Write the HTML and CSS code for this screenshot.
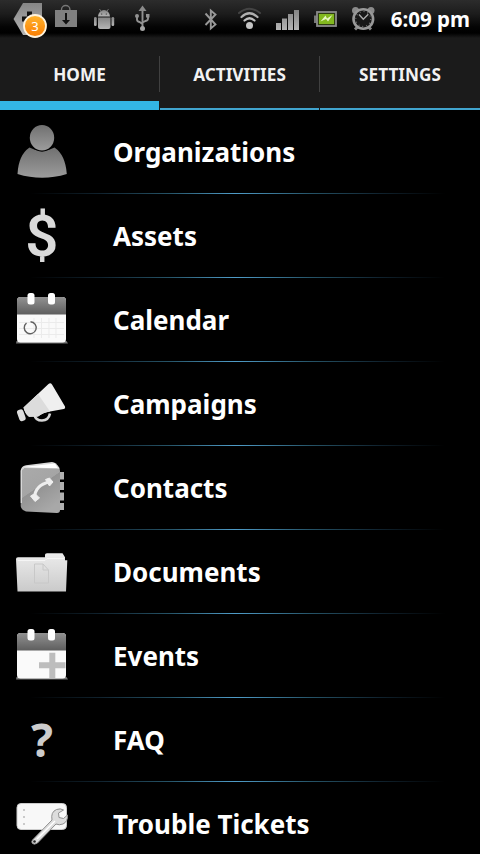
FILE: index.html
```html
<!DOCTYPE html>
<html lang="en">
<head>
<meta charset="UTF-8">
<meta name="viewport" content="width=device-width, initial-scale=1.0">
<title>Home</title>
<link rel="stylesheet" href="styles.css">
</head>
<body>
<svg class="defs" width="0" height="0">
    <defs>
        <linearGradient id="grey" x1="0" y1="0" x2="0" y2="1"><stop offset="0" stop-color="#707070"/><stop offset="1" stop-color="#9c9c9c"/></linearGradient>
        <linearGradient id="light" x1="0" y1="0" x2="0" y2="1"><stop offset="0" stop-color="#ececec"/><stop offset="1" stop-color="#cacaca"/></linearGradient>
        <linearGradient id="head" x1="0" y1="0" x2="0" y2="1"><stop offset="0" stop-color="#929292"/><stop offset="1" stop-color="#5e5e5e"/></linearGradient>
        <linearGradient id="status" x1="0" y1="0" x2="0" y2="1"><stop offset="0" stop-color="#858585"/><stop offset="1" stop-color="#b5b5b5"/></linearGradient>
        <linearGradient id="orange" x1="0" y1="0" x2="0" y2="1"><stop offset="0" stop-color="#ffb52e"/><stop offset="1" stop-color="#fa7c00"/></linearGradient>
        <linearGradient id="cover" x1="0" y1="0" x2=".6" y2="1"><stop offset="0" stop-color="#aaa"/><stop offset=".5" stop-color="#a5a5a5"/><stop offset=".51" stop-color="#939393"/><stop offset="1" stop-color="#a8a8a8"/></linearGradient>
        <g id="calendar">
            <path d="M4.500 51h50l1.500 2.500h-52z" fill="#777"/>
            <rect x="5" y="7" width="49" height="45.500" rx="3.500" fill="#fafafa"/>
            <path d="M5 24.500V10.500a3.500 3.500 0 0 1 3.500-3.500h42a3.500 3.500 0 0 1 3.500 3.500v14z" fill="url(#head)"/>
            <rect x="15.500" y="3" width="7" height="11.500" rx="2.500" fill="#fff"/>
            <rect x="36" y="3" width="7" height="11.500" rx="2.500" fill="#fff"/>
        </g>
    </defs>
</svg>

<div class="status-bar">
    <svg class="status-icons" width="480" height="40" viewBox="0 0 480 40">
        <!-- notification tag with counter -->
        <path d="M23 3h19v32H23l-9.500-16z" fill="url(#status)"/>
        <path d="M27 11.500h5v5h-5v5h-5v-5h5z" fill="#111"/>
        <circle cx="35" cy="26" r="11" fill="url(#orange)" stroke="#fff3dc" stroke-width="1.800"/>
        <text class="badge" x="35" y="30.500" text-anchor="middle">3</text>
        <!-- market bag -->
        <path d="M61.500 11V9.500a4.200 4 0 0 1 8.400 0V11" fill="none" stroke="#777" stroke-width="1.400"/>
        <rect x="55" y="10" width="22" height="17" fill="#808080"/>
        <path d="M65 13h2v7h3l-4 4.500-4-4.500h3z" fill="#111"/>
        <!-- android -->
        <g fill="url(#status)">
            <path d="M98 16.500a6 6.500 0 0 1 12 0z"/>
            <path d="M98 17.500h12.500v9.500a2 2 0 0 1-2 2h-8.500a2 2 0 0 1-2-2z"/>
            <rect x="94" y="17" width="2.700" height="9" rx="1.300"/>
            <rect x="111.500" y="17" width="2.700" height="9" rx="1.300"/>
        </g>
        <path d="M99.500 9l2 3m7-3l-2 3" stroke="#808080" stroke-width=".8"/>
        <circle cx="101.700" cy="14" r=".6" fill="#222"/><circle cx="106.300" cy="14" r=".6" fill="#222"/>
        <!-- usb -->
        <path d="M142.500 9v19M137 16.500v3q0 2 2.500 2.500l3 2m5.500-7v1.500q0 2-2.500 2.500l-3 1.500" fill="none" stroke="#929292" stroke-width="1.900"/>
        <path d="M142.500 5.500l4 5.500h-8z" fill="#8a8a8a"/>
        <circle cx="142.500" cy="28.500" r="2.500" fill="#a5a5a5"/>
        <circle cx="137" cy="16" r="2" fill="#929292"/>
        <rect x="146" y="14" width="3.500" height="3.500" fill="#929292"/>
        <!-- bluetooth -->
        <path d="M205.500 13.500l10 11-4.700 4V10.500l4.700 4-10 10.500" fill="none" stroke="#999" stroke-width="1.900"/>
        <!-- wifi -->
        <g fill="none" stroke-linecap="round">
            <path d="M239 13q10.500-8.500 21 0" stroke="#444" stroke-width="2"/>
            <path d="M241.500 17q8-7.500 16 0" stroke="#b0b0b0" stroke-width="2.200"/>
            <path d="M244.500 20.500q5-4.500 10 0" stroke="#c0c0c0" stroke-width="2.200"/>
        </g>
        <circle cx="249.500" cy="25.500" r="3.500" fill="#c4c4c4"/>
        <!-- signal -->
        <path d="M276 23h5v7h-5zM282 18.500h5V30h-5zM288 14h5v16h-5zM294 10h5v20h-5z" fill="url(#status)"/>
        <!-- battery -->
        <rect x="314" y="15.500" width="3" height="7.500" fill="#777"/>
        <rect x="317" y="12" width="19" height="14" fill="#303e12" stroke="#8b8b8b" stroke-width="1.800"/>
        <rect x="319" y="14" width="15" height="10" fill="#82b81e"/>
        <path d="M320.500 21.500l5-6 1.500 3 5.500-3.500-4.500 6.500-2-2.500z" fill="#e6f5c4"/>
        <!-- alarm -->
        <path d="M355 29.500l3-3m13 3l-3-3" stroke="#888" stroke-width="3"/>
        <circle cx="355.500" cy="10.500" r="3.500" fill="#8b8b8b"/><circle cx="371" cy="10.500" r="3.500" fill="#8b8b8b"/>
        <circle cx="363.300" cy="19" r="9.800" fill="#181818" stroke="#999" stroke-width="2.600"/>
        <circle cx="363.300" cy="19" r="7.500" fill="none" stroke="#777" stroke-width="1.200" stroke-dasharray="1 2.927"/>
        <path d="M359 14.500l4.300 4.800 5-5" fill="none" stroke="#aaa" stroke-width="1.400"/>
    </svg>
    <span class="clock">6:09 pm</span>
</div>

<nav class="tabs">
    <a class="tab active"><span>HOME</span></a>
    <a class="tab"><span>ACTIVITIES</span></a>
    <a class="tab"><span>SETTINGS</span></a>
</nav>

<ul class="menu">
    <li class="row">
        <svg class="icon" viewBox="0 0 60 60">
            <path d="M17.500 25.500q12.500 7 25 0 11 7.500 12.300 26.500-24.800 7.500-49.300 0Q6.500 33 17.500 25.500z" fill="url(#grey)"/>
            <ellipse cx="30" cy="15.700" rx="13.300" ry="14" fill="#000"/>
            <ellipse cx="30" cy="15.700" rx="12.200" ry="12.700" fill="url(#grey)"/>
        </svg>
        <span class="label">Organizations</span>
    </li>
    <li class="row">
        <svg class="icon" viewBox="0 0 60 60">
            <text class="dollar" x="29.700" y="49.500" text-anchor="middle">$</text>
        </svg>
        <span class="label">Assets</span>
    </li>
    <li class="row">
        <svg class="icon" viewBox="0 0 60 60">
            <use href="#calendar"/>
            <path d="M7 32.500h45M7 38.500h45M7 44.500h45M22 28v20M29.500 28v20M37 28v20M44 28v20" stroke="#ebebeb" fill="none"/>
            <path d="M14.500 33a6 6 0 1 0 4-1.300" fill="none" stroke="#606060" stroke-width="1.400"/>
        </svg>
        <span class="label">Calendar</span>
    </li>
    <li class="row">
        <svg class="icon" viewBox="0 0 60 60">
            <path d="M22.500 41q1 5.500 7.500 5.500t8-7" fill="none" stroke="#d5d5d5" stroke-width="2.600"/>
            <path d="M11.500 33.500L36.500 10q2-1.500 3.500.5L53 32.500q.8 2-1.200 2.500L38 37.500q-7 1-12 5L17 42.800q-4-3-5.500-9.300z" fill="#efefef"/>
            <path d="M11.500 33.500L26 20l12 17.500q-7 1-12 5L17 42.800q-4-3-5.500-9.300z" fill="#dcdcdc"/>
            <rect x="6" y="35.500" width="6.500" height="11.500" rx="2.500" transform="rotate(-20 9.300 41)" fill="#ddd"/>
        </svg>
        <span class="label">Campaigns</span>
    </li>
    <li class="row">
        <svg class="icon" viewBox="0 0 60 60">
            <path d="M9 14q-.5-6 5-6.700L40 4q4 0 7.500 6v8z" fill="#d8d8d8"/>
            <path d="M11 9l32-3.500 3 5z" fill="#fff"/>
            <path d="M48 14h4v7.500h-4zM48 24h4v8h-4zM48 34.500h4v8h-4zM48 45h4v7h-4z" fill="#b0b0b0"/>
            <path d="M8.700 13q0-3 3-3l33.300.5q3 .3 3 3.500v38q0 3-3 3l-31-1.500q-5.300-2-5.300-5.500z" fill="url(#cover)"/>
            <path d="M9.300 45V13q0-2.500 2.500-2.500" fill="none" stroke="#ddd" stroke-width="1.200"/>
            <path d="M22.500 40q.5-13 15-16" fill="none" stroke="#eee" stroke-width="3"/>
            <path d="M18.500 38l4.500-2.500 4.500 4.500-4.500 3.500zM33.500 21.500l4-1.500 3.500 4-3.500 4z" fill="#eee" stroke="#eee" stroke-linejoin="round"/>
        </svg>
        <span class="label">Contacts</span>
    </li>
    <li class="row">
        <svg class="icon" viewBox="0 0 60 60">
            <path d="M4 17q0-1.700 2-1.700h27v-2.500q0-1.500 2-1.500h15.500l2.500 4v3h2.300L54 49.500H5.500z" fill="url(#light)"/>
            <path d="M6 18.500h27l2-2h17" stroke="#f5f5f5" fill="none"/>
            <path d="M22.500 22h8.500l5.500 6v13h-14zM31 22v6h5.500" fill="none" stroke="#c8c8c8"/>
        </svg>
        <span class="label">Documents</span>
    </li>
    <li class="row">
        <svg class="icon" viewBox="0 0 60 60">
            <use href="#calendar"/>
            <path d="M37.300 26.700h6v9.600h10.200v6H43.300V52h-6v-9.700H27v-6h10.300z" fill="#bdbdbd"/>
        </svg>
        <span class="label">Events</span>
    </li>
    <li class="row">
        <svg class="icon" viewBox="0 0 60 60">
            <text class="question" x="30" y="46.500" text-anchor="middle">?</text>
        </svg>
        <span class="label">FAQ</span>
    </li>
    <li class="row">
        <svg class="icon" viewBox="0 0 60 60">
            <rect x="5" y="9.500" width="49.500" height="26" rx="4" fill="#f8f8f8" stroke="#ccc"/>
            <path d="M12 15v2m0 5v2m0 5v2" stroke="#bbb" stroke-width="1.500"/>
            <path d="M20.500 46l19.500-20q-1.500-8 4.500-10.500 4-1.500 7 .5l-5 3 .5 4.500 4.500 1 4-3.500q.5 6.500-4.500 9-4 1.500-7 0l-18.500 19q-3 2-5 .5-1.500-1.500 0-3.500z" fill="#ddd" stroke="#909090"/>
            <path d="M25 45l18-18" stroke="#fff" stroke-width="1.500"/>
            <circle cx="22.500" cy="47.500" r="1.300" fill="#222"/>
        </svg>
        <span class="label">Trouble Tickets</span>
    </li>
</ul>
</body>
</html>
```
FILE: styles.css
```css
html, body {
    margin: 0;
    padding: 0;
    height: 100%;
    overflow: hidden;
}
body {
    background-color: #000;
    color: #fff;
    font-family: "Noto Sans", "Open Sans", sans-serif;
    font-weight: bold;
}
.defs {
    display: block;
}
.status-bar {
    position: relative;
    height: 38px;
    display: flex;
    justify-content: flex-end;
    align-items: center;
    padding-right: 10px;
    background: linear-gradient(#2c2c2c 0, #1c1c1c 14px, #040404 27px, #000 33px, #1b1b1b 38px);
}
/* icons run slightly over the tab bar */
.status-icons {
    position: absolute;
    top: 0;
    left: 0;
}
.badge {
    font-size: 13px;
    font-weight: normal;
    fill: #fff;
}
.clock {
    font-size: 20.5px;
    line-height: 38px;
}
.tabs {
    display: grid;
    grid-template-columns: 160px 160px 160px;
    height: 72px;
    background-color: #1b1b1b;
}
.tab {
    box-sizing: border-box;
    display: flex;
    justify-content: center;
    align-items: flex-start;
    padding-top: 18px;
    margin-right: 1px;
    border-bottom: 2px solid #41a5cf;
    font-size: 17.2px;
    color: #f2f2f2;
}
.tab span {
    flex: 1;
    height: 36px;
    line-height: 38px;
    text-align: center;
    box-shadow: 1px 0 #404040;
}
.tab:last-child {
    margin-right: 0;
}
.tab:last-child span {
    box-shadow: none;
}
.tab.active {
    border-bottom: 9px solid #33b5e5;
}
.menu {
    list-style: none;
    margin: 0;
    padding: 0;
}
.row {
    box-sizing: border-box;
    display: flex;
    align-items: center;
    gap: 41px;
    height: 84px;
    padding-left: 12px;
    background: linear-gradient(90deg, transparent 30px, #10222e 100px, #265468 170px, #4f9cc8 235px, #265468 310px, #10222e 380px, transparent 445px) bottom / 100% 1px no-repeat;
}
.icon {
    width: 60px;
    height: 60px;
    overflow: visible;
}
.label {
    font-size: 26px;
}
.dollar {
    font-family: Roboto, "Noto Sans", sans-serif;
    font-size: 58px;
    font-weight: 600;
    fill: #dadada;
}
.question {
    font-size: 46px;
    fill: #ccc;
}
```
